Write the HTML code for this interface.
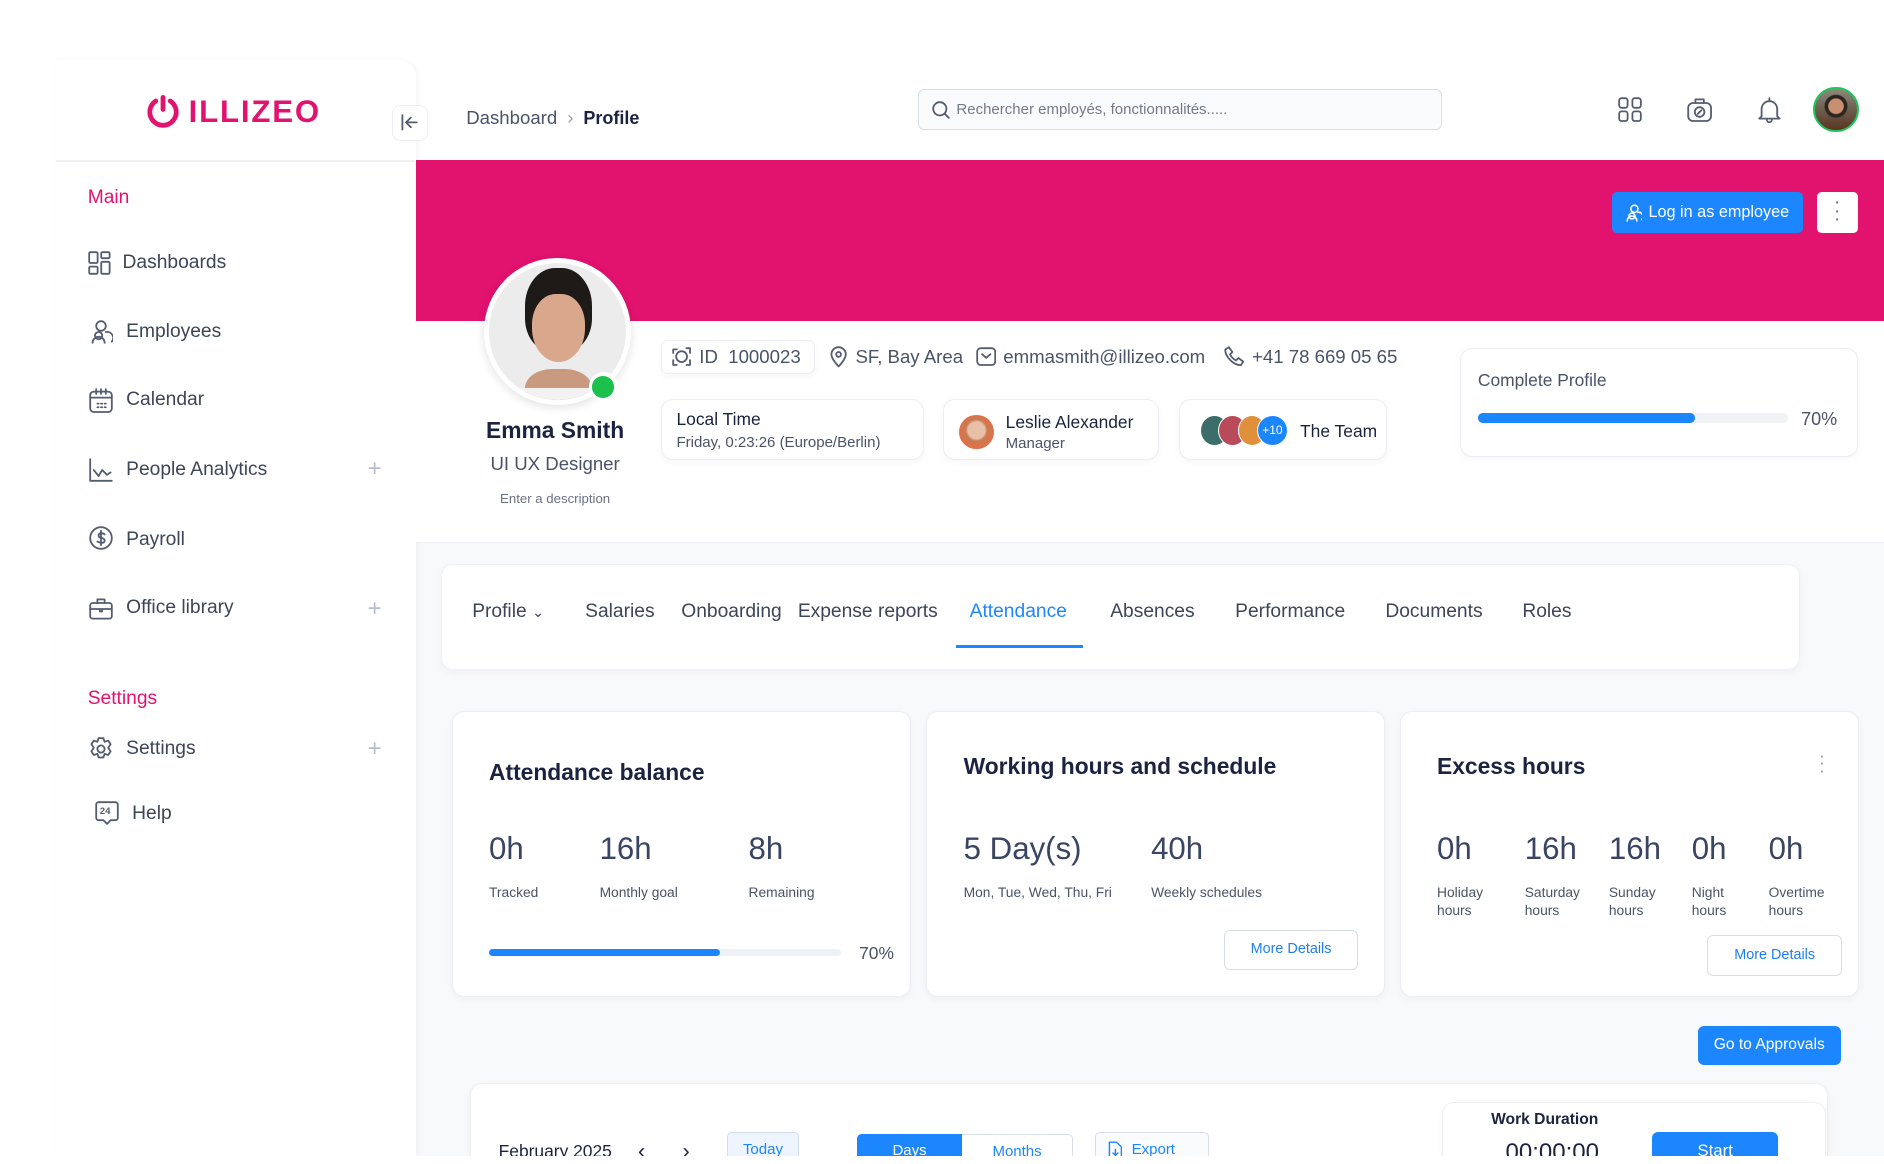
<!DOCTYPE html>
<html><head><meta charset="utf-8">
<style>
*{box-sizing:border-box;margin:0;padding:0}
html,body{width:1884px;height:1164px;overflow:hidden;background:#fff;font-family:"Liberation Sans",Arial,sans-serif}
#w{position:relative;width:1568px;height:969px;zoom:1.20153;overflow:hidden;background:#fff}
.a{position:absolute}
.t{position:absolute;white-space:nowrap}
.ink{color:#1b2340}
.g{color:#4a5368}
.card{position:absolute;background:#fff;border:1px solid #eceef3;border-radius:10px;box-shadow:0 2px 6px rgba(20,30,60,.04)}
svg{position:absolute;fill:none;stroke:#545c70;stroke-width:1.5;stroke-linecap:round;stroke-linejoin:round}
.nav{font-size:16px;color:#3d4558}
.plus{position:absolute;left:306px;color:#b7bdcc;font-size:20px;font-weight:300}
.tab{position:absolute;top:500px;font-size:16px;color:#3d4558}
.big{position:absolute;font-size:26px;color:#3a4463}
.sm{position:absolute;font-size:11.5px;color:#4a5368;line-height:15px}
.btnw{position:absolute;background:#fff;border:1px solid #d9dde6;border-radius:5px;color:#1e7ff0;font-size:12px;text-align:center}
</style></head><body><div id="w">
<div class="a" style="left:345px;top:452px;width:1223px;height:510px;background:#f8f9fb"></div>
<div class="a" style="left:47px;top:50px;width:299px;height:912px;background:#fff;border-radius:0 14px 0 0;box-shadow:2px 0 4px rgba(0,0,0,.04)"></div>
<div class="a" style="left:47px;top:133px;width:298px;height:2px;background:#f0f1f4"></div>
<svg style="left:121px;top:79px;stroke:#e2126f;stroke-width:4" width="30" height="28" viewBox="0 0 30 28"><path d="M9 5 A11 11 0 1 0 21 5"/><path d="M15 2 V12"/></svg>
<div class="t" style="left:157px;top:78px;font-size:26px;font-weight:bold;color:#e2126f;letter-spacing:1.5px">ILLIZEO</div>
<div class="a" style="left:326px;top:87px;width:30px;height:30px;background:#fff;border:1px solid #eceef3;border-radius:7px"></div>
<svg style="left:333px;top:95px" width="16" height="14" viewBox="0 0 16 14"><path d="M2 1V13M14 7H5M9 3L5 7L9 11"/></svg>
<div class="t" style="left:73px;top:156px;font-size:16px;color:#e2126f">Main</div>
<svg style="left:73px;top:209px" width="19" height="20" viewBox="0 0 19 20"><rect x="1" y="1" width="7" height="9" rx="1"/><rect x="11" y="1" width="7" height="5" rx="1"/><rect x="1" y="13" width="7" height="6" rx="1"/><rect x="11" y="9" width="7" height="10" rx="1"/></svg>
<div class="t nav" style="left:102px;top:210px">Dashboards</div>
<svg style="left:74px;top:266px" width="20" height="20" viewBox="0 0 20 20"><circle cx="10" cy="5" r="4"/><circle cx="8" cy="13" r="3"/><path d="M3 19a5 5 0 0 1 10 0M14 10a5 5 0 0 1 5 8"/></svg>
<div class="t nav" style="left:105px;top:267px">Employees</div>
<svg style="left:74px;top:323px" width="20" height="21" viewBox="0 0 20 21"><rect x="1" y="3" width="18" height="17" rx="3"/><path d="M6 1v4M10 1v4M14 1v4M1 8h18M7 13h1M10 13h1M13 13h1M7 16h1M10 16h1M13 16h1"/></svg>
<div class="t nav" style="left:105px;top:324px">Calendar</div>
<svg style="left:74px;top:381px" width="20" height="20" viewBox="0 0 20 20"><path d="M1 1V19H19M4 10l4 5 3-5 4 4 3-2"/></svg>
<div class="t nav" style="left:105px;top:382px">People Analytics</div>
<div class="plus" style="top:379px">+</div>
<svg style="left:74px;top:438px" width="20" height="20" viewBox="0 0 20 20"><circle cx="10" cy="10" r="9"/><path d="M13 7c-1-1-5-2-5 1s5 1 5 4-4 2-6 1M10 4v12"/></svg>
<div class="t nav" style="left:105px;top:440px">Payroll</div>
<svg style="left:74px;top:497px" width="20" height="19" viewBox="0 0 20 19"><rect x="1" y="5" width="18" height="13" rx="2"/><path d="M7 5V2h6v3M1 10h18M9 10v2h2v-2"/></svg>
<div class="t nav" style="left:105px;top:497px">Office library</div>
<div class="plus" style="top:495px">+</div>
<div class="t" style="left:73px;top:573px;font-size:16px;color:#e2126f">Settings</div>
<svg style="left:74px;top:613px" width="20" height="20" viewBox="0 0 20 20"><circle cx="10" cy="10" r="3"/><path d="M8 1h4l1 3 3-1 2 3-2 3 2 3-2 3-3-1-1 3H8l-1-3-3 1-2-3 2-3-2-3 2-3 3 1z"/></svg>
<div class="t nav" style="left:105px;top:614px">Settings</div>
<div class="plus" style="top:612px">+</div>
<svg style="left:79px;top:667px" width="20" height="20" viewBox="0 0 20 20"><path d="M3 1h14a2 2 0 0 1 2 2v11a2 2 0 0 1-2 2h-4l-3 3-3-3H3a2 2 0 0 1-2-2V3a2 2 0 0 1 2-2z"/></svg>
<div class="t" style="left:83px;top:671px;font-size:8px;font-weight:bold;color:#545c70">24</div>
<div class="t nav" style="left:110px;top:668px">Help</div>
<div class="t" style="left:388px;top:89px;font-size:15.5px;color:#4a5368">Dashboard <span style="color:#9aa1b0;margin:0 4px">›</span> <span class="ink" style="font-weight:bold;font-size:15px">Profile</span></div>
<div class="a" style="left:764px;top:74px;width:436px;height:34px;border:1px solid #d9dde6;border-radius:5px;background:#fafbfc"></div>
<svg style="left:776px;top:84px" width="15" height="15" viewBox="0 0 15 15"><circle cx="6.5" cy="6.5" r="5.5"/><path d="M11 11l3 3"/></svg>
<div class="t" style="left:796px;top:84px;font-size:12.5px;color:#737a8b">Rechercher employés, fonctionnalités.....</div>
<svg style="left:1347px;top:81px" width="20" height="21" viewBox="0 0 20 21"><rect x="1" y="1" width="7" height="8" rx="2"/><rect x="12" y="1" width="7" height="8" rx="2"/><rect x="1" y="12" width="7" height="8" rx="2"/><rect x="12" y="12" width="7" height="8" rx="2"/></svg>
<svg style="left:1404px;top:81px" width="21" height="21" viewBox="0 0 21 21"><rect x="1" y="5" width="19" height="15" rx="4"/><path d="M7 5V2h7v3"/><circle cx="10.5" cy="12.5" r="4"/><path d="M9 14l3-3"/></svg>
<svg style="left:1463px;top:81px" width="19" height="22" viewBox="0 0 19 22"><path d="M3 16V10a6.5 6.5 0 0 1 13 0v6l2 2H1z"/><path d="M9.5 1v2M7.5 19a2 2 0 0 0 4 0"/></svg>
<div class="a" style="left:1509px;top:72px;width:38px;height:38px;border-radius:50%;border:2px solid #22c55e;background:radial-gradient(circle at 50% 42%,#c89070 0 6px,#2a2420 7px 9px,transparent 10px),linear-gradient(#8d8a7c,#6a5a48 55%,#5a3520)"></div>
<div class="a" style="left:346px;top:133px;width:1222px;height:134px;background:#e2126f"></div>
<div class="a" style="left:1342px;top:160px;width:159px;height:34px;background:#1c86ff;border-radius:4px"></div>
<svg style="left:1353px;top:170px;stroke:#fff;stroke-width:1.3" width="14" height="15" viewBox="0 0 14 15"><circle cx="7" cy="4" r="3"/><circle cx="5" cy="10" r="2.5"/><path d="M1 14a4 4 0 0 1 8 0M10 7a3.5 3.5 0 0 1 3 6"/></svg>
<div class="t" style="left:1372px;top:169px;font-size:13.5px;color:#fff">Log in as employee</div>
<div class="a" style="left:1512px;top:160px;width:34px;height:34px;background:#fff;border-radius:4px"></div>
<div class="t" style="left:1525px;top:166px;font-size:16px;color:#6a7183;line-height:7px;width:8px;text-align:center">·<br>·<br>·</div>
<div class="a" style="left:346px;top:267px;width:1222px;height:185px;background:#fff;border-bottom:1px solid #eef0f3"></div>
<div class="a" style="left:403px;top:215px;width:122px;height:122px;border-radius:50%;background:#fff;box-shadow:0 2px 8px rgba(0,0,0,.12)"></div>
<div class="a" style="left:407px;top:219px;width:114px;height:114px;border-radius:50%;overflow:hidden;background:#ececec">
 <div class="a" style="left:30px;top:4px;width:56px;height:70px;border-radius:45% 45% 40% 40%;background:#1e1a18"></div>
 <div class="a" style="left:36px;top:26px;width:44px;height:56px;border-radius:45% 45% 50% 50%;background:#d9a88c"></div>
 <div class="a" style="left:30px;top:88px;width:56px;height:40px;border-radius:40% 40% 0 0;background:#c99a80"></div>
 <div class="a" style="left:16px;top:104px;width:84px;height:20px;background:#f2f2f2"></div>
</div>
<div class="a" style="left:490px;top:310px;width:24px;height:24px;border-radius:50%;background:#fff"></div>
<div class="a" style="left:493px;top:313px;width:18px;height:18px;border-radius:50%;background:#1cc04c"></div>
<div class="t ink" style="left:362px;top:347px;width:200px;text-align:center;font-size:19px;font-weight:bold">Emma Smith</div>
<div class="t g" style="left:362px;top:377px;width:200px;text-align:center;font-size:15.5px">UI UX Designer</div>
<div class="t" style="left:362px;top:409px;width:200px;text-align:center;font-size:11px;color:#6a7183">Enter a description</div>
<div class="card" style="left:550px;top:283px;width:128px;height:28px;border-radius:6px"></div>
<svg style="left:559px;top:289px" width="16" height="16" viewBox="0 0 16 16"><path d="M1 5V2h3M12 1h3v4M15 11v4h-3M4 15H1v-4"/><circle cx="8" cy="8" r="4.5"/></svg>
<div class="t g" style="left:582px;top:288px;font-size:15.5px">ID&nbsp; 1000023</div>
<svg style="left:690px;top:288px" width="16" height="18" viewBox="0 0 16 18"><path d="M8 17s6-6 6-10A6 6 0 0 0 2 7c0 4 6 10 6 10z"/><circle cx="8" cy="7" r="2"/></svg>
<div class="t g" style="left:712px;top:288px;font-size:15.5px">SF, Bay Area</div>
<svg style="left:812px;top:289px" width="17" height="16" viewBox="0 0 17 16"><rect x="1" y="1" width="15" height="14" rx="3"/><path d="M5 6l3.5 3L12 6"/></svg>
<div class="t g" style="left:835px;top:288px;font-size:15.5px">emmasmith@illizeo.com</div>
<svg style="left:1019px;top:288px" width="17" height="17" viewBox="0 0 17 17"><path d="M4 1l3 4-2 2c1 2 3 4 5 5l2-2 4 3-2 3C8 16 1 9 1 3z"/></svg>
<div class="t g" style="left:1042px;top:288px;font-size:15.5px">+41 78 669 05 65</div>
<div class="card" style="left:550px;top:332px;width:219px;height:51px"></div>
<div class="t ink" style="left:563px;top:340px;font-size:14.5px">Local Time</div>
<div class="t g" style="left:563px;top:361px;font-size:12.5px">Friday, 0:23:26 (Europe/Berlin)</div>
<div class="card" style="left:785px;top:332px;width:180px;height:51px"></div>
<div class="a" style="left:798px;top:345px;width:29px;height:29px;border-radius:50%;background:radial-gradient(circle at 50% 45%,#e8c0a8 0 7px,#c87a50 9px,#e2704a 14px)"></div>
<div class="t ink" style="left:837px;top:343px;font-size:14.5px">Leslie Alexander</div>
<div class="t g" style="left:837px;top:362px;font-size:12.5px">Manager</div>
<div class="card" style="left:981px;top:332px;width:173px;height:51px"></div>
<div class="a" style="left:999px;top:345px;width:24px;height:26px;border-radius:50%;background:#3b6d6a;border:1px solid #fff"></div>
<div class="a" style="left:1014px;top:345px;width:24px;height:26px;border-radius:50%;background:#b84a5a;border:1px solid #fff"></div>
<div class="a" style="left:1030px;top:345px;width:24px;height:26px;border-radius:50%;background:#e0903a;border:1px solid #fff"></div>
<div class="a" style="left:1046px;top:345px;width:26px;height:26px;border-radius:50%;background:#1c86ff;border:1px solid #fff;color:#fff;font-size:10px;text-align:center;line-height:24px">+10</div>
<div class="t ink" style="left:1082px;top:350px;font-size:14.5px">The Team</div>
<div class="card" style="left:1215px;top:290px;width:331px;height:90px"></div>
<div class="t g" style="left:1230px;top:308px;font-size:14.5px">Complete Profile</div>
<div class="a" style="left:1230px;top:344px;width:258px;height:8px;border-radius:4px;background:#f1f2f5"></div>
<div class="a" style="left:1230px;top:344px;width:181px;height:8px;border-radius:4px;background:#1c86ff"></div>
<div class="t g" style="left:1499px;top:340px;font-size:15px">70%</div>
<div class="card" style="left:367px;top:469px;width:1131px;height:89px;border-color:#f0f1f4"></div>
<div class="tab" style="left:393px">Profile <span style="font-size:12px">⌄</span></div>
<div class="tab" style="left:487px">Salaries</div>
<div class="tab" style="left:567px">Onboarding</div>
<div class="tab" style="left:664px">Expense reports</div>
<div class="tab" style="left:807px;color:#1c86ff">Attendance</div>
<div class="a" style="left:796px;top:537px;width:105px;height:2px;background:#1c86ff"></div>
<div class="tab" style="left:924px">Absences</div>
<div class="tab" style="left:1028px">Performance</div>
<div class="tab" style="left:1153px">Documents</div>
<div class="tab" style="left:1267px">Roles</div>
<div class="card" style="left:376px;top:592px;width:382px;height:238px"></div>
<div class="t ink" style="left:407px;top:632px;font-size:19px;font-weight:bold">Attendance balance</div>
<div class="big" style="left:407px;top:692px">0h</div><div class="sm" style="left:407px;top:735px">Tracked</div>
<div class="big" style="left:499px;top:692px">16h</div><div class="sm" style="left:499px;top:735px">Monthly goal</div>
<div class="big" style="left:623px;top:692px">8h</div><div class="sm" style="left:623px;top:735px">Remaining</div>
<div class="a" style="left:407px;top:790px;width:293px;height:6px;border-radius:3px;background:#eef2f8"></div>
<div class="a" style="left:407px;top:790px;width:192px;height:6px;border-radius:3px;background:#1c86ff"></div>
<div class="t g" style="left:715px;top:785px;font-size:14.5px">70%</div>
<div class="card" style="left:771px;top:592px;width:382px;height:238px"></div>
<div class="t ink" style="left:802px;top:627px;font-size:19px;font-weight:bold">Working hours and schedule</div>
<div class="big" style="left:802px;top:692px">5 Day(s)</div><div class="sm" style="left:802px;top:735px">Mon, Tue, Wed, Thu, Fri</div>
<div class="big" style="left:958px;top:692px">40h</div><div class="sm" style="left:958px;top:735px">Weekly schedules</div>
<div class="btnw" style="left:1019px;top:774px;width:111px;height:33px;line-height:31px">More Details</div>
<div class="card" style="left:1165px;top:592px;width:382px;height:238px"></div>
<div class="t ink" style="left:1196px;top:627px;font-size:19px;font-weight:bold">Excess hours</div>
<div class="t" style="left:1514px;top:626px;font-size:14px;color:#8a90a0;line-height:6px">·<br>·<br>·</div>
<div class="big" style="left:1196px;top:692px">0h</div><div class="sm" style="left:1196px;top:735px">Holiday<br>hours</div>
<div class="big" style="left:1269px;top:692px">16h</div><div class="sm" style="left:1269px;top:735px">Saturday<br>hours</div>
<div class="big" style="left:1339px;top:692px">16h</div><div class="sm" style="left:1339px;top:735px">Sunday<br>hours</div>
<div class="big" style="left:1408px;top:692px">0h</div><div class="sm" style="left:1408px;top:735px">Night<br>hours</div>
<div class="big" style="left:1472px;top:692px">0h</div><div class="sm" style="left:1472px;top:735px">Overtime<br>hours</div>
<div class="btnw" style="left:1421px;top:778px;width:112px;height:34px;line-height:32px">More Details</div>
<div class="a" style="left:1413px;top:854px;width:119px;height:32px;background:#1c86ff;border-radius:5px;color:#fff;font-size:13px;text-align:center;line-height:32px">Go to Approvals</div>
<div class="card" style="left:391px;top:901px;width:1130px;height:100px"></div>
<div class="t ink" style="left:415px;top:950px;font-size:14.5px">February 2025</div>
<div class="t ink" style="left:531px;top:947px;font-size:18px">‹</div>
<div class="t ink" style="left:568px;top:947px;font-size:18px">›</div>
<div class="a" style="left:605px;top:942px;width:60px;height:30px;border:1px solid #cfe0f8;background:#eef5ff;border-radius:4px;color:#1c86ff;font-size:12.5px;text-align:center;line-height:28px">Today</div>
<div class="a" style="left:713px;top:944px;width:180px;height:30px;border:1px solid #d9dde6;border-radius:4px;background:#fff"></div>
<div class="a" style="left:713px;top:944px;width:88px;height:30px;border-radius:4px 0 0 4px;background:#1c86ff;color:#fff;font-size:12.5px;text-align:center;line-height:28px">Days</div>
<div class="t" style="left:826px;top:951px;font-size:12.5px;color:#1c86ff">Months</div>
<div class="a" style="left:911px;top:942px;width:95px;height:30px;border:1px solid #d9dde6;border-radius:4px;background:#fafbfc;color:#1c86ff;font-size:12.5px;line-height:28px;padding-left:30px">Export</div>
<svg style="left:921px;top:950px;stroke:#1c86ff;stroke-width:1.2" width="13" height="15" viewBox="0 0 13 15"><path d="M2 1h6l4 4v9H2z"/><path d="M7 7v5M5 10l2 2 2-2"/></svg>
<div class="card" style="left:1200px;top:917px;width:320px;height:80px"></div>
<div class="t ink" style="left:1241px;top:925px;font-size:13px;font-weight:bold">Work Duration</div>
<div class="t ink" style="left:1253px;top:948px;font-size:20px">00:00:00</div>
<div class="a" style="left:1375px;top:942px;width:105px;height:40px;background:#1c86ff;border-radius:5px;color:#fff;font-size:14px;text-align:center;line-height:32px">Start</div>
<div class="a" style="left:0;top:962px;width:1568px;height:10px;background:#fff"></div>
</div></body></html>
